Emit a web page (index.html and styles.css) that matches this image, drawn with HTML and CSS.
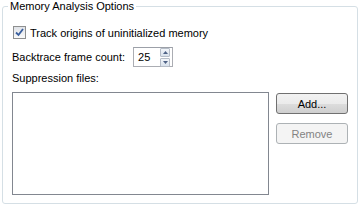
FILE: index.html
```html
<!DOCTYPE html>
<html lang="en">
<head>
    <meta charset="UTF-8">
    <title>Memory Analysis Options</title>
    <link rel="stylesheet" href="styles.css">
</head>
<body>
    <fieldset class="group">
        <legend>Memory Analysis Options</legend>

        <!-- Track origins -->
        <label class="check-row">
            <span class="checkbox">
                <svg width="9" height="9" viewBox="0 0 9 9">
                    <path d="M1 4.5 L3.5 7 L8 1" fill="none" stroke="#3a5f9e" stroke-width="1.8"/>
                </svg>
            </span>
            Track origins of uninitialized memory
        </label>

        <!-- Backtrace frames -->
        <div class="spin-row">
            <span>Backtrace frame count:</span>
            <div class="spinbox">
                <span class="spin-value">25</span>
                <div class="spin-buttons">
                    <span class="spin-btn">
                        <svg width="5" height="3" viewBox="0 0 5 3"><path d="M0 3 L2.5 0 L5 3 Z" fill="#4d6185"/></svg>
                    </span>
                    <span class="spin-btn">
                        <svg width="5" height="3" viewBox="0 0 5 3"><path d="M0 0 L2.5 3 L5 0 Z" fill="#4d6185"/></svg>
                    </span>
                </div>
            </div>
        </div>

        <!-- Suppression files -->
        <div class="files-label">Suppression files:</div>
        <div class="files-row">
            <div class="file-list"></div>
            <div class="file-buttons">
                <button class="btn">Add...</button>
                <button class="btn" disabled>Remove</button>
            </div>
        </div>
    </fieldset>
</body>
</html>
```

FILE: styles.css
```css
body {
    margin: 0;
    background: #fff;
    font-family: "Liberation Sans", Tahoma, sans-serif;
    font-size: 11px;
    color: #000;
}

.group {
    margin: 0 3px 0 2px;
    padding: 0 9px 8px 9px;
    border: 1px solid #d5dfe5;
    border-radius: 3px;
    min-width: 0;
}

.group legend {
    padding: 0 2px;
    margin-left: -4px;
    line-height: 13px;
}

/* checkbox row */
.check-row {
    display: flex;
    align-items: center;
    gap: 4px;
    margin-top: 13px;
    margin-left: 1px;
    height: 13px;
}

.checkbox {
    width: 11px;
    height: 11px;
    border: 1px solid #8e8f8f;
    background: linear-gradient(#e0e3e8, #fafafa);
    display: flex;
    align-items: center;
    justify-content: center;
}

/* spin row */
.spin-row {
    display: flex;
    align-items: center;
    gap: 8px;
    margin-top: 8px;
    height: 20px;
}

.spinbox {
    width: 38px;
    height: 18px;
    border: 1px solid #abadb3;
    border-top-color: #9ca0a8;
    display: flex;
    align-items: center;
    justify-content: space-between;
}

.spin-value {
    padding-left: 4px;
}

.spin-buttons {
    display: flex;
    flex-direction: column;
    gap: 1px;
    margin-right: 2px;
}

.spin-btn {
    width: 8px;
    height: 7px;
    border: 1px solid #b6bdc8;
    border-radius: 1px;
    background: linear-gradient(#f2f5f9, #d8e1ec);
    display: flex;
    align-items: center;
    justify-content: center;
}

.files-label {
    margin-top: 5px;
    line-height: 13px;
}

.files-row {
    display: flex;
    gap: 7px;
    margin-top: 7px;
}

.file-list {
    width: 255px;
    height: 101px;
    border: 1px solid #828790;
    background: #fff;
}

.file-buttons {
    display: flex;
    flex-direction: column;
    gap: 9px;
    margin-top: 1px;
}

.btn {
    width: 72px;
    height: 21px;
    font-family: inherit;
    font-size: 11px;
    color: #000;
    border: 1px solid #707070;
    border-radius: 3px;
    background: linear-gradient(#f2f2f2 0%, #ebebeb 50%, #dddddd 51%, #cfcfcf 100%);
    padding: 0;
}

.btn:disabled {
    color: #838383;
    border-color: #adb2b5;
    background: #f4f4f4;
}
```
